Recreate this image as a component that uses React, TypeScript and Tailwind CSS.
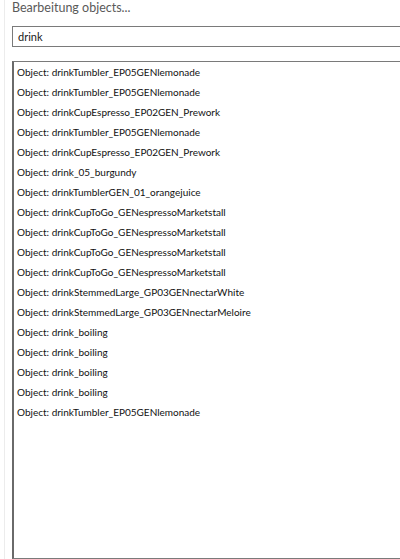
const items = [
  "drinkTumbler_EP05GENlemonade",
  "drinkTumbler_EP05GENlemonade",
  "drinkCupEspresso_EP02GEN_Prework",
  "drinkTumbler_EP05GENlemonade",
  "drinkCupEspresso_EP02GEN_Prework",
  "drink_05_burgundy",
  "drinkTumblerGEN_01_orangejuice",
  "drinkCupToGo_GENespressoMarketstall",
  "drinkCupToGo_GENespressoMarketstall",
  "drinkCupToGo_GENespressoMarketstall",
  "drinkCupToGo_GENespressoMarketstall",
  "drinkStemmedLarge_GP03GENnectarWhite",
  "drinkStemmedLarge_GP03GENnectarMeloire",
  "drink_boiling",
  "drink_boiling",
  "drink_boiling",
  "drink_boiling",
  "drinkTumbler_EP05GENlemonade",
]

export default function App() {
  return (
    <div className="w-[400px] h-[559px] overflow-hidden bg-white" style={{ fontFamily: 'Lato, "Noto Sans", sans-serif' }}>
      <div className="ml-[4px] h-full border-l border-[#ececec] pl-[7px] flex flex-col">
        <div className="h-[26px] text-[12.5px] leading-[16px] text-[#5a5a5a]">Bearbeitung objects...</div>
        <div className="w-[420px] h-[21px] border border-[#7a7a7a] pl-[5px] text-[11px] leading-[19px] text-[#1a1a1a]">drink</div>
        <div className="mt-[14px] w-[420px] flex-1 border border-[#7a7a7a] border-l-2 border-l-[#6a6a6a] pl-[3px]">
          {items.map((it, i) => (
            <div key={i} className="h-[20px] leading-[20px] text-[10px] text-[#111]">Object: {it}</div>
          ))}
        </div>
      </div>
    </div>
  )
}
